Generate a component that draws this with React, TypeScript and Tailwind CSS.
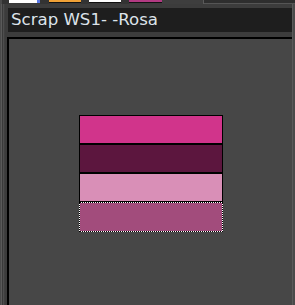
import React from "react";

const swatches = [
  { color: "bg-[#d1348b]", dotted: false },
  { color: "bg-[#5c163e]", dotted: false },
  { color: "bg-[#d98fb7]", dotted: false },
  { color: "bg-[#a24c7c]", dotted: true },
];

export default function App() {
  return (
    <div
      className="w-[295px] h-[305px] bg-[#3c3c3c] flex flex-col overflow-hidden"
      style={{ fontFamily: '"DejaVu Sans", Verdana, sans-serif' }}
    >
      {/* top tab strip */}
      <div className="h-[4px] flex">
        <div className="w-[2px] bg-[#4a4a4a]" />
        <div className="w-[7px] bg-[#333333]" />
        <div className="w-[31px] flex flex-col">
          <div className="h-[3px] flex">
            <div className="flex-1 bg-white" />
            <div className="w-[3px] bg-[#5a78e6]" />
          </div>
          <div className="h-[1px] bg-[#3a3a3a]" />
        </div>
        <div className="w-[9px] bg-[#333333]" />
        <div className="w-[32px] flex flex-col">
          <div className="h-[3px] bg-[#f0a136] border-b border-[#111]" />
          <div className="h-[1px] bg-[#3a3a3a]" />
        </div>
        <div className="w-[8px] bg-[#333333]" />
        <div className="w-[32px] flex flex-col">
          <div className="h-[3px] bg-white border-b border-[#111]" />
          <div className="h-[1px] bg-[#3a3a3a]" />
        </div>
        <div className="w-[8px] bg-[#333333]" />
        <div className="w-[33px] flex flex-col">
          <div className="h-[3px] bg-[#b23a82] border-b border-[#111]" />
          <div className="h-[1px] bg-[#3a3a3a]" />
        </div>
        <div className="w-[41px] bg-[#3e3e3e]" />
        <div className="w-[1px] bg-[#5a5a5a]" />
        <div className="flex-1 flex flex-col">
          <div className="h-[3px] bg-[#2e2e2e]" />
          <div className="h-[1px] bg-[#555555]" />
        </div>
      </div>

      <div className="flex-1 flex">
        {/* left stripes */}
        <div className="w-[7px] flex">
          <div className="w-[1px] bg-[#4a4a4a]" />
          <div className="w-[1px] bg-[#5a5a5a]" />
          <div className="w-[1px] bg-[#3a3a3a]" />
          <div className="w-[1px] bg-[#4e4e4e]" />
          <div className="w-[1px] bg-[#404040]" />
          <div className="w-[1px] bg-[#3c3c3c]" />
          <div className="w-[1px] bg-[#3c3c3c]" />
        </div>

        <div className="flex-1 flex flex-col pt-[4px]">
          <div className="h-[24px] ml-[1px] bg-[#1e1e1e] pl-[3px] text-[16.6px] leading-[24px] text-[#dde3ea] whitespace-nowrap">
            Scrap WS1- -Rosa
          </div>
          <div className="h-[5px]" />
          <div className="flex-1 border-t-2 border-l-2 border-black bg-[#474747] flex justify-center items-start pt-[76px]">
            <div className="w-[144px] flex flex-col">
              {swatches.map((s, i) =>
                s.dotted ? (
                  <div
                    key={i}
                    className="h-[30px] border border-dotted border-black bg-white"
                  >
                    <div className={`h-full ${s.color}`} />
                  </div>
                ) : (
                  <div
                    key={i}
                    className={`h-[29px] border border-black ${s.color}`}
                  />
                )
              )}
            </div>
          </div>
        </div>

        {/* right stripes */}
        <div className="w-[3px] flex">
          <div className="w-[1px] bg-[#5a5a5a]" />
          <div className="w-[2px] bg-[#4a4a4a]" />
        </div>
      </div>
    </div>
  );
}
